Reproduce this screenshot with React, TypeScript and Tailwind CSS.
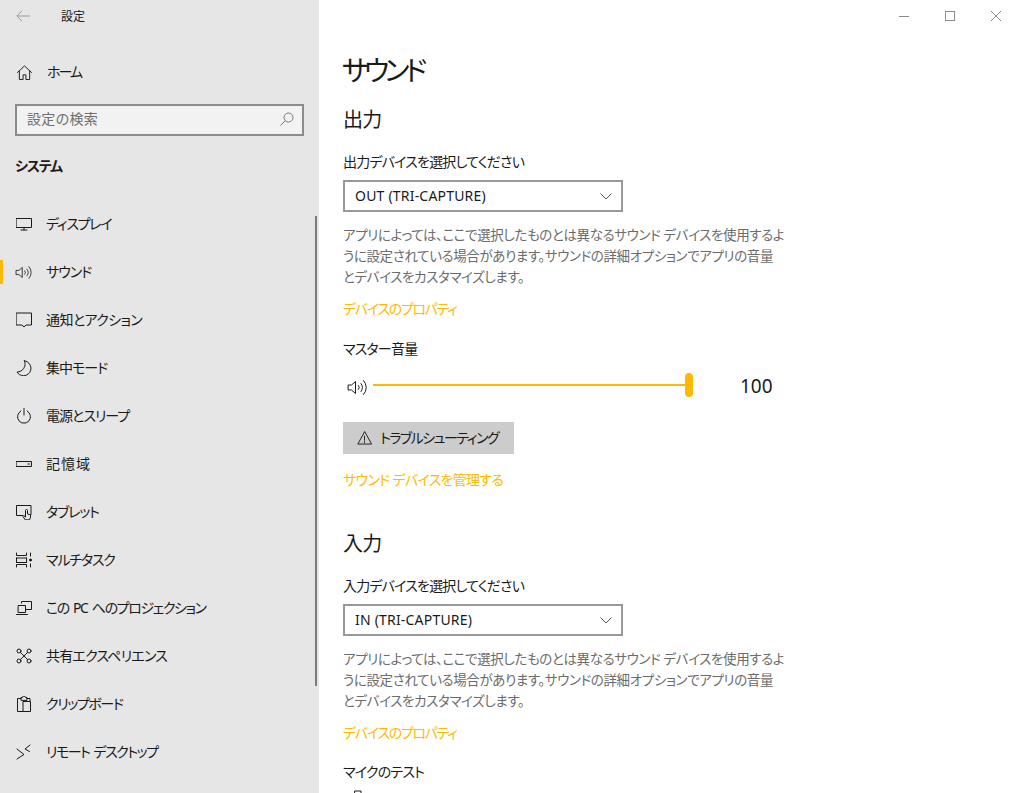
import type { ReactNode } from 'react';

const ic = { fill: 'none', stroke: '#1a1a1a', strokeWidth: 1, strokeLinecap: 'round', strokeLinejoin: 'round' } as const;

function Speaker({ className }: { className: string }) {
  return (
    <svg viewBox="0 0 20 18" className={className} {...ic}>
      <path d="M1.500 6.500h3l4-3.500v12l-4-3.500h-3z" />
      <path d="M11.500 7a3 3 0 0 1 0 4" />
      <path d="M14 5a6 6 0 0 1 0 8" />
      <path d="M16.500 2a10 10 0 0 1 0 14" />
    </svg>
  );
}

const navItems: { label: string; tracking: string; icon: ReactNode; active?: boolean }[] = [
  {
    label: 'ディスプレイ',
    tracking: 'tracking-[-1.3px]',
    icon: (
      <svg viewBox="0 0 16 16" className="h-4 w-4" {...ic}>
        <path d="M.5 2.500h15v9H.5zM5 14h6M8 11.500V14" />
      </svg>
    ),
  },
  { label: 'サウンド', tracking: 'tracking-[-1px]', icon: <Speaker className="h-[15px] w-[17px]" />, active: true },
  {
    label: '通知とアクション',
    tracking: 'tracking-[-0.6px]',
    icon: (
      <svg viewBox="0 0 16 16" className="h-4 w-4" {...ic}>
        <path d="M.5 1h15v12H10l-2 2-2-2H.5z" />
      </svg>
    ),
  },
  {
    label: '集中モード',
    tracking: 'tracking-[-1px]',
    icon: (
      <svg viewBox="0 0 16 16" className="h-4 w-4" {...ic}>
        <path d="M8.500 .8A7.500 7.500 0 1 1 1 12A8 8 0 0 0 8.500 .8z" />
      </svg>
    ),
  },
  {
    label: '電源とスリープ',
    tracking: 'tracking-[-1px]',
    icon: (
      <svg viewBox="0 0 16 16" className="h-4 w-4" {...ic}>
        <path d="M8 .5V7M4.800 3a6.500 6.500 0 1 0 6.400 0" />
      </svg>
    ),
  },
  {
    label: '記憶域',
    tracking: 'tracking-[1px]',
    icon: (
      <svg viewBox="0 0 16 16" className="h-4 w-4" {...ic}>
        <path d="M.5 5.500h15v5H.5zM12 8h1.500" />
      </svg>
    ),
  },
  {
    label: 'タブレット',
    tracking: 'tracking-[-1.2px]',
    icon: (
      <svg viewBox="0 0 16 16" className="h-4 w-4" {...ic}>
        <path d="M7 11.500H.5v-10h14.500v9" />
        <path d="M9 15.500l-2-3 .8-.8 1.700 1.300V6.500a1 1 0 0 1 2 0V10l3 .7v2.500l-.8 2.300z" />
      </svg>
    ),
  },
  {
    label: 'マルチタスク',
    tracking: 'tracking-[-1.2px]',
    icon: (
      <svg viewBox="0 0 16 16" className="h-4 w-4" {...ic}>
        <path d="M.5 1v2.500h10V1M.5 15v-2.500h10V15M.5 6v4.500M10.500 6v4.500M.5 6h10M.5 10.500h10" />
        <path d="M14.500 1v3M14.500 12v3" />
        <circle cx="14.500" cy="8" r="1" fill="#1a1a1a" />
      </svg>
    ),
  },
  {
    label: 'この PC へのプロジェクション',
    tracking: 'tracking-[-1.4px]',
    icon: (
      <svg viewBox="0 0 16 16" className="h-4 w-4" {...ic}>
        <path d="M5.500 3V1.500h10v8H10" />
        <path d="M2.500 5.500h7v7h-7zM.5 14.500h11" />
      </svg>
    ),
  },
  {
    label: '共有エクスペリエンス',
    tracking: 'tracking-[-0.8px]',
    icon: (
      <svg viewBox="0 0 16 16" className="h-4 w-4" {...ic}>
        <circle cx="3" cy="3" r="2" />
        <circle cx="13" cy="3" r="2" />
        <circle cx="3" cy="13" r="2" />
        <circle cx="13" cy="13" r="2" />
        <path d="M4.500 4.500l7 7M11.500 4.500l-7 7" />
      </svg>
    ),
  },
  {
    label: 'クリップボード',
    tracking: 'tracking-[-1.4px]',
    icon: (
      <svg viewBox="0 0 16 16" className="h-4 w-4" {...ic}>
        <path d="M5 2.500H1.500v13h13v-10H7v10M11 2.500h3v3M5 4V1.500h1.500a1.500 1.500 0 0 1 3 0H11V4z" />
      </svg>
    ),
  },
  {
    label: 'リモート デスクトップ',
    tracking: 'tracking-[-1.5px]',
    icon: (
      <svg viewBox="0 0 16 16" className="h-4 w-4" {...ic}>
        <path d="M1 5l7 5.500-7 4.500M14 1L9 5l4.500 2.500" />
      </svg>
    ),
  },
];

function Select({ value }: { value: string }) {
  return (
    <div className="flex h-8 w-[280px] items-center justify-between border-2 border-[#999999] bg-white pl-2.5 pr-[9px] text-sm tracking-[0.2px] text-[#1a1a1a]">
      <span>{value}</span>
      <svg viewBox="0 0 12 7" className="h-[7px] w-3" fill="none" stroke="#555555">
        <path d="M.5 .5L6 6l5.500-5.500" />
      </svg>
    </div>
  );
}

function DeviceBlock({ heading, label, value }: { heading: string; label: string; value: string }) {
  return (
    <>
      <h2 className="mt-px flex h-[30px] items-center text-xl leading-[30px] tracking-[-0.8px] text-[#1a1a1a]">{heading}</h2>
      <p className="mt-[17px] h-5 text-sm leading-5 tracking-[-0.8px] text-[#1a1a1a]">{label}</p>
      <div className="mt-2">
        <Select value={value} />
      </div>
      <p className="mt-[13px] whitespace-nowrap text-[13.5px] leading-[21px] tracking-[-0.38px] text-[#6b6b6b]">
        アプリによっては、ここで選択したものとは異なるサウンド デバイスを使用するよ
        <br />
        うに設定されている場合があります。サウンドの詳細オプションでアプリの音量
        <br />
        とデバイスをカスタマイズします。
      </p>
      <a className="mt-[11px] block h-5 text-sm leading-5 tracking-[-1.3px] text-[#ffb900]">デバイスのプロパティ</a>
    </>
  );
}

export default function App() {
  return (
    <div
      className="flex h-[793px] w-[1015px] overflow-hidden bg-white [font-feature-settings:'palt']"
      style={{ fontFamily: '"Noto Sans", "Noto Sans CJK JP", sans-serif' }}
    >
      {/* サイドバー */}
      <aside className="relative flex w-[319px] shrink-0 flex-col bg-[#e6e6e6]">
        <div className="flex h-8 items-center pl-4">
          <svg viewBox="0 0 14 12" className="h-3 w-[14px]" fill="none" stroke="#999999">
            <path d="M14 6H1M6 .8L.8 6 6 11.200" />
          </svg>
          <span className="ml-[31px] mt-0.5 text-xs text-[#1a1a1a]">設定</span>
        </div>
        <div className="mt-4 flex h-12 items-center pl-[17px]">
          <svg viewBox="0 0 16 16" className="h-[15px] w-[15px]" {...ic}>
            <path d="M.5 8L8 1l7.500 7M2.500 6.500v9h4v-5h3v5h4v-9" />
          </svg>
          <span className="ml-[15px] text-sm tracking-[-2px] text-[#1a1a1a]">ホーム</span>
        </div>
        <div className="mx-[15px] mt-2 flex h-8 items-center justify-between border-2 border-[#8c8c8c] bg-[#f2f2f2] pb-0.5 pl-[10px] pr-[8px]">
          <span className="text-sm tracking-[0.3px] text-[#6e6e6e]">設定の検索</span>
          <svg viewBox="0 0 14 14" className="h-[14px] w-[14px]" fill="none" stroke="#777777">
            <circle cx="8.500" cy="5.500" r="4.500" />
            <path d="M5.200 8.800L.5 13.500" />
          </svg>
        </div>
        <h2 className="mt-5 flex h-5 items-center pl-[15px] text-sm font-bold leading-5 tracking-[-1.2px] text-[#1a1a1a]">システム</h2>
        <nav className="mt-6 flex flex-col">
          {navItems.map((item) => (
            <div key={item.label} className="relative flex h-12 shrink-0 items-center">
              {item.active && <div className="absolute left-0 top-3 h-6 w-[3px] bg-[#ffb900]" />}
              <div className="flex w-[46px] justify-center pl-px">{item.icon}</div>
              <span className={`whitespace-nowrap text-sm text-[#1a1a1a] [word-spacing:2px] ${item.tracking}`}>{item.label}</span>
            </div>
          ))}
        </nav>
        {/* スクロールバー */}
        <div className="absolute left-[315px] top-[216px] h-[470px] w-[2px] bg-[#7a7a7a]" />
      </aside>

      {/* メイン */}
      <main className="flex min-w-0 flex-1 flex-col">
        <div className="flex h-8 shrink-0 items-center justify-end">
          <div className="flex w-[46px] justify-center">
            <div className="h-px w-[10px] bg-[#8c8c8c]" />
          </div>
          <div className="flex w-[46px] justify-center">
            <div className="h-[10px] w-[10px] border border-[#8c8c8c]" />
          </div>
          <div className="-mr-1 flex w-[46px] justify-center">
            <svg viewBox="0 0 10 10" className="h-[10px] w-[10px]" stroke="#8c8c8c">
              <path d="M0 0l10 10M10 0L0 10" />
            </svg>
          </div>
        </div>
        <div className="pl-6">
          <h1 className="mt-[18px] -ml-px flex h-10 items-center text-[28px] leading-10 tracking-[-4.5px] text-[#1a1a1a]">サウンド</h1>
          <div className="mt-[15px]">
            <DeviceBlock heading="出力" label="出力デバイスを選択してください" value="OUT (TRI-CAPTURE)" />
          </div>
          <p className="mt-[20px] h-5 text-sm leading-5 tracking-[-0.8px] text-[#1a1a1a]">マスター音量</p>
          <div className="mt-[14px] flex h-6 w-[430px] items-center">
            <Speaker className="ml-1 mt-1 h-[19px] w-5" />
            <div className="relative ml-[6px] h-0.5 w-[320px] bg-[#ffb900]">
              <div className="absolute right-0 top-[-11px] h-6 w-2 rounded-full bg-[#ffb900]" />
            </div>
            <span className="ml-[47px] mt-0.5 text-[19px] text-[#1a1a1a]">100</span>
          </div>
          <button className="mt-[25px] flex h-8 w-[171px] items-center bg-[#cccccc] pl-[14px] text-sm text-[#1a1a1a]">
            <svg viewBox="0 0 16 15" className="h-[14px] w-[15px]" {...ic}>
              <path d="M8 1L.8 14h14.400zM8 5.500v4.500M8 11.500v1" />
            </svg>
            <span className="ml-2 whitespace-nowrap tracking-[-1.5px]">トラブルシューティング</span>
          </button>
          <a className="mt-4 block h-5 text-sm leading-5 tracking-[-0.7px] text-[#ffb900]">サウンド デバイスを管理する</a>
          <div className="mt-[39px]">
            <DeviceBlock heading="入力" label="入力デバイスを選択してください" value="IN (TRI-CAPTURE)" />
          </div>
          <p className="mt-[19px] h-5 text-sm leading-5 tracking-[-0.8px] text-[#1a1a1a]">マイクのテスト</p>
          <svg viewBox="0 0 10 16" className="ml-[10px] mt-2 h-4 w-[10px]" {...ic}>
            <path d="M2 1h6v9H2z" />
          </svg>
        </div>
      </main>
    </div>
  );
}
